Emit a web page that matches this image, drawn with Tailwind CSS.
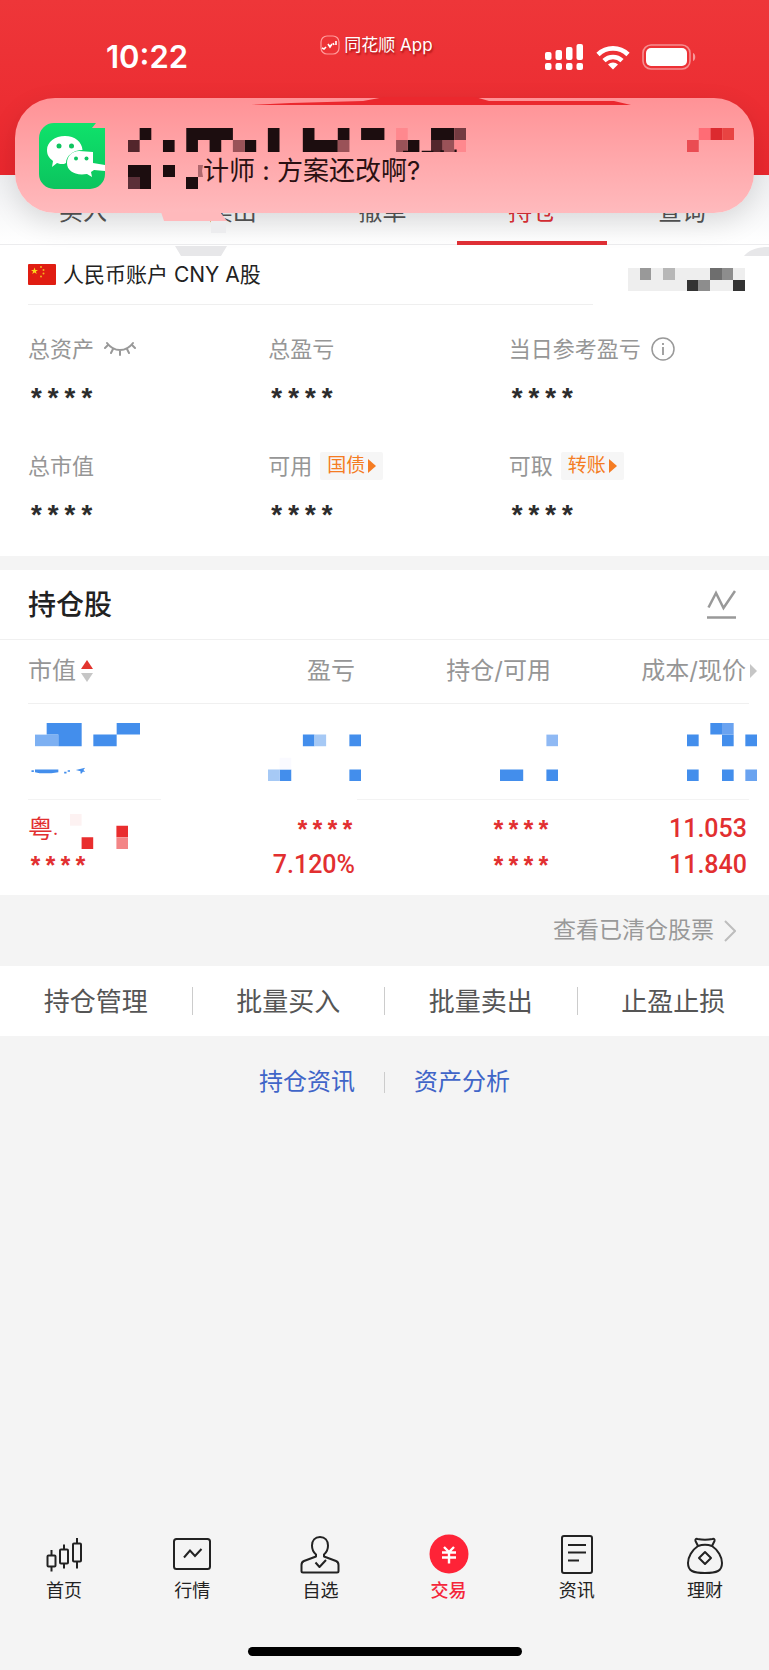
<!DOCTYPE html>
<html lang="zh-CN">
<head>
    <meta charset="UTF-8">
    <meta name="viewport" content="width=device-width, initial-scale=1.0">
    <title>持仓 - 同花顺</title>
    <script src="https://cdn.jsdelivr.net/npm/@tailwindcss/browser@4"></script>
</head>
<body class="relative min-h-screen flex flex-col overflow-x-hidden bg-[#f4f4f4] text-[#222] font-['Inter','Noto_Sans_CJK_SC',sans-serif]">
    <!-- Status bar -->
    <header class="flex h-[175px] items-start justify-between bg-linear-to-b from-[#ee3639] to-[#eb272e] pl-[106px] pr-[72px] pt-8 text-white">
        <span class="mt-1 w-[102px] text-[31px] leading-[42px] font-semibold">10:22</span>
        <div class="flex items-center gap-1 text-[17px] leading-[26px] text-shadow-[1px_2px_2px_rgb(120_0_0/0.6)]">
            <svg class="size-5" viewBox="0 0 20 20" fill="none">
                <rect x="1" y="1" width="18" height="18" rx="6" stroke="#ff9a9a" stroke-width="1.2"/>
                <path d="M2 13l2 1 2-2M8 9l2 3 2-3M13 8l1 2M16 6v4" stroke="#fff" stroke-width="1.6"/>
            </svg>
            <span>同花顺 App</span>
        </div>
        <div class="mt-3 flex items-center gap-3">
            <svg class="h-[26px] w-[39px]" viewBox="0 0 39 26" fill="#fff">
                <rect x="0" y="8" width="6.500" height="8" rx="2"/>
                <rect x="10.500" y="6" width="6.500" height="10" rx="2"/>
                <rect x="21" y="3" width="6.500" height="13" rx="2"/>
                <rect x="31.500" y="0" width="6.500" height="16" rx="2"/>
                <rect x="0" y="19" width="6.500" height="7" rx="2"/>
                <rect x="10.500" y="19" width="6.500" height="7" rx="2"/>
                <rect x="21" y="19" width="6.500" height="7" rx="2"/>
                <rect x="31.500" y="19" width="6.500" height="7" rx="2"/>
            </svg>
            <svg class="h-[25px] w-[34px]" viewBox="0 0 34 25" fill="none" stroke="#fff" stroke-width="4.6">
                <path d="M2 9.5a21.500 21.500 0 0 1 30 0"/>
                <path d="M8 15.600a13 13 0 0 1 18 0"/>
                <path d="M17 24.500l-5-5a7.200 7.200 0 0 1 10 0z" fill="#fff" stroke="none"/>
            </svg>
            <svg class="h-[26px] w-[55px]" viewBox="0 0 55 26">
                <rect x="1" y="1" width="47" height="24" rx="8" fill="none" stroke="#fff" stroke-opacity=".45" stroke-width="1.6"/>
                <rect x="4" y="4" width="41" height="18" rx="5" fill="#fff"/>
                <path d="M51 9c3 1 3 7 0 8z" fill="#fff" fill-opacity=".5"/>
            </svg>
        </div>
    </header>

    <!-- Trade tabs -->
    <nav class="flex h-[70px] border-b border-[#ececee] bg-linear-to-b from-[#eff0f2] to-white pl-2 pr-3 text-[24px] text-[#555]">
        <button class="flex-1 pt-1">买入</button>
        <button class="flex-1 pt-1">卖出</button>
        <button class="flex-1 pt-1">撤单</button>
        <button class="-mb-px flex-1 border-b-4 border-[#e03036] pt-2 text-[#e03036]">持仓</button>
        <button class="flex-1 pt-1">查询</button>
    </nav>

    <!-- Account summary -->
    <section class="bg-white">
        <div class="flex h-[59px] items-center justify-between pl-7 pr-6">
            <h1 class="flex items-center gap-[7px] text-[21px] leading-[30px]">
                <svg class="h-[21px] w-7" viewBox="0 0 28 21">
                    <rect width="28" height="21" rx="1" fill="#e01d12"/>
                    <path d="M6.500 3.500l.9 2.500h2.600l-2.100 1.600.8 2.500-2.200-1.500-2.200 1.500.8-2.500L3 6h2.600z" fill="#fbd51c"/>
                    <g fill="#f4b21c"><circle cx="13" cy="3" r="1"/><circle cx="15.500" cy="6" r="1"/><circle cx="15.500" cy="9.500" r="1"/><circle cx="13" cy="12.500" r="1"/></g>
                </svg>
                人民币账户 CNY A股
            </h1>
            <svg class="mt-[10px] h-[23px] w-[117px]" viewBox="0 0 10 2" preserveAspectRatio="none" shape-rendering="crispEdges">
                <path fill="#eee" d="M0 0h10v2H0z"/>
                <path fill="#999" d="M1 0h1v1H1z"/>
                <path fill="#b7b7b7" d="M3 0h1v1H3z"/>
                <path fill="#6e6e6e" d="M7 0h1v1H7z"/>
                <path fill="#8d8d8d" d="M8 0h1v1H8zM6 1h1v1H6z"/>
                <path fill="#333" d="M5 1h1v1H5zM9 1h1v1H9z"/>
            </svg>
        </div>
        <div class="ml-7 mr-44 h-px bg-[#efefef]"></div>

        <dl class="grid grid-cols-3 gap-y-[33px] pt-7 pb-[22px] pl-7 pr-5 text-[22px] text-[#969696]">
            <div>
                <dt class="flex h-8 items-center gap-[10px]">总资产
                    <button aria-label="显示资产">
                        <svg class="h-[18px] w-8" viewBox="0 0 32 18" fill="none" stroke="#999" stroke-width="2" stroke-linecap="round">
                            <path d="M3 3c3 4 7 7 13 7s10-3 13-7M4 5L1 8M9 9l-2 4M16 10v5M23 9l2 4M28 5l3 3"/>
                        </svg>
                    </button>
                </dt>
                <dd class="pt-5 font-['Liberation_Mono',monospace] text-[28px] leading-8 font-bold text-[#2c2c2c]">****</dd>
            </div>
            <div>
                <dt class="flex h-8 items-center">总盈亏</dt>
                <dd class="pt-5 font-['Liberation_Mono',monospace] text-[28px] leading-8 font-bold text-[#2c2c2c]">****</dd>
            </div>
            <div>
                <dt class="flex h-8 items-center gap-[10px]">当日参考盈亏
                    <button aria-label="说明">
                        <svg class="size-6" viewBox="0 0 24 24" fill="none" stroke="#999" stroke-width="1.500">
                            <circle cx="12" cy="12" r="11"/>
                            <path d="M12 10v8M12 6v2" stroke-width="1.800"/>
                        </svg>
                    </button>
                </dt>
                <dd class="pt-5 font-['Liberation_Mono',monospace] text-[28px] leading-8 font-bold text-[#2c2c2c]">****</dd>
            </div>
            <div>
                <dt class="flex h-8 items-center">总市值</dt>
                <dd class="pt-5 font-['Liberation_Mono',monospace] text-[28px] leading-8 font-bold text-[#2c2c2c]">****</dd>
            </div>
            <div>
                <dt class="flex h-8 items-center gap-2">可用
                    <button class="flex h-7 items-center gap-[3px] rounded-xs bg-[#f6f6f6] px-[7px] text-[19px] text-[#f57c23]">国债
                        <svg class="h-[14px] w-2" viewBox="0 0 8 14" fill="currentColor"><path d="M0 0l8 7-8 7z"/></svg>
                    </button>
                </dt>
                <dd class="pt-5 font-['Liberation_Mono',monospace] text-[28px] leading-8 font-bold text-[#2c2c2c]">****</dd>
            </div>
            <div>
                <dt class="flex h-8 items-center gap-2">可取
                    <button class="flex h-7 items-center gap-[3px] rounded-xs bg-[#f6f6f6] px-[7px] text-[19px] text-[#f57c23]">转账
                        <svg class="h-[14px] w-2" viewBox="0 0 8 14" fill="currentColor"><path d="M0 0l8 7-8 7z"/></svg>
                    </button>
                </dt>
                <dd class="pt-5 font-['Liberation_Mono',monospace] text-[28px] leading-8 font-bold text-[#2c2c2c]">****</dd>
            </div>
        </dl>
    </section>

    <!-- Positions -->
    <section class="mt-[14px] bg-white">
        <div class="flex h-[70px] items-center justify-between border-b border-[#f0f0f0] pl-7 pr-[33px]">
            <h2 class="text-[28px] leading-10 font-medium">持仓股</h2>
            <button aria-label="走势">
                <svg class="h-[29px] w-[29px]" viewBox="0 0 29 29" fill="none" stroke="#999" stroke-width="2.500">
                    <path d="M1.500 17.500L9 3l7.500 15L28 1M0 27.500h29"/>
                </svg>
            </button>
        </div>
        <div class="ml-7 mr-5">
            <table class="w-full table-fixed text-right">
                <thead>
                    <tr class="h-[63px] border-b border-[#f0f0f0] text-[24px] text-[#969696]">
                        <th class="text-left font-normal">
                            <button class="flex items-center gap-[5px]">市值
                                <svg class="h-[22px] w-3" viewBox="0 0 12 22"><path d="M6 0l6 9H0z" fill="#e2352f"/><path d="M0 13h12l-6 9z" fill="#c6c6c6"/></svg>
                            </button>
                        </th>
                        <th class="w-[196px] pr-[2px] font-normal">盈亏</th>
                        <th class="w-[196px] pr-[2px] font-normal">持仓/可用</th>
                        <th class="w-[196px] font-normal">
                            <button class="-mr-2 inline-flex items-center gap-1">成本/现价
                                <svg class="h-[14px] w-[7px]" viewBox="0 0 7 14" fill="#c6c6c6"><path d="M0 0l7 7-7 7z"/></svg>
                            </button>
                        </th>
                    </tr>
                </thead>
                <tbody>
                    <!-- Masked position, one unit per mosaic cell -->
                    <tr class="h-24 align-top">
                        <td class="border-b border-[#f3f3f3] pt-[19px]">
                            <svg class="ml-[7px] h-[58px] w-[105px] overflow-visible" viewBox="0 0 9 5" preserveAspectRatio="none" fill="#438eec">
                                <path fill="#7db0f2" d="M0 1h2v1H0z"/>
                                <path d="M1 0h3v2H2V1H1zM7 0h2v1H7zM5 1h2v1H5z"/>
                                <path d="M0 4h2v.25l-.6.080H.4L0 4.250zM-.3 4.080h.2v.15h-.2zM2.500 4.200h.2v.150h-.2zM2.800 4.080h.2v.120h-.2zM3.500 4.050l.8-.200-.150.200.150.150h-.200l-.100.150h-.1v-.200z"/>
                            </svg>
                        </td>
                        <td class="pt-[19px]">
                            <svg class="-mr-1 inline-block h-[58px] w-[93px]" viewBox="0 0 8 5" preserveAspectRatio="none" fill="#438eec">
                                <path d="M3 1h1v1H3zM7 1h1v1H7zM1 4h1v1H1zM7 4h1v1H7z"/>
                                <path fill="#a6c9f5" d="M4 1h1v1H4zM0 4h1v1H0z"/>
                                <path fill="#fafaff" d="M1 3h1v1H1z"/>
                            </svg>
                        </td>
                        <td class="border-b border-[#f3f3f3] pt-[19px]">
                            <svg class="-mr-[5px] inline-block h-[58px] w-[58px]" viewBox="0 0 5 5" preserveAspectRatio="none" fill="#438eec">
                                <path fill="#8fb9f4" d="M4 1h1v1H4z"/>
                                <path d="M0 4h2v1H0zM4 4h1v1H4z"/>
                            </svg>
                        </td>
                        <td class="border-b border-[#f3f3f3] pt-[19px]">
                            <svg class="-mr-2 inline-block h-[58px] w-[70px]" viewBox="0 0 6 5" preserveAspectRatio="none" fill="#438eec">
                                <path d="M2 0h1v1H2zM0 1h1v1H0zM3 1h1v1H3zM5 1h1v1H5zM0 4h1v1H0zM3 4h1v1H3z"/>
                                <path fill="#6aa3f0" d="M3 0h1v1H3zM5 4h1v1H5z"/>
                            </svg>
                        </td>
                    </tr>
                    <tr class="h-24 text-[#e22f30]">
                        <td class="text-left">
                            <div class="flex h-9 items-start text-[25px] leading-9">粤<span class="text-[18px]">.</span>
                                <svg class="mt-[3px] ml-3 h-[35px] w-[58px]" viewBox="0 0 5 3" preserveAspectRatio="none" fill="#e92d2e">
                                    <path fill="#fdf2f2" d="M0 0h1v1H0z"/>
                                    <path d="M4 1h1v1H4zM1 2h1v1H1z"/>
                                    <path fill="#f38586" d="M4 2h1v1H4z"/>
                                </svg>
                            </div>
                            <div class="h-9 pt-1 font-['Liberation_Mono',monospace] text-[25px] leading-9 font-bold">****</div>
                        </td>
                        <td class="pr-[2px]">
                            <div class="h-9 pt-1 font-['Liberation_Mono',monospace] text-[25px] leading-9 font-bold">****</div>
                            <div class="font-[Roboto] text-[25px] leading-9 font-medium">7.120%</div>
                        </td>
                        <td class="pr-[2px]">
                            <div class="h-9 pt-1 font-['Liberation_Mono',monospace] text-[25px] leading-9 font-bold">****</div>
                            <div class="h-9 pt-1 font-['Liberation_Mono',monospace] text-[25px] leading-9 font-bold">****</div>
                        </td>
                        <td class="pr-[2px] font-[Roboto] text-[25px] leading-9 font-medium">
                            <div>11.053</div>
                            <div>11.840</div>
                        </td>
                    </tr>
                </tbody>
            </table>
        </div>
    </section>

    <a href="#" class="flex h-[71px] items-center justify-end gap-[10px] pr-[33px] text-[23px] text-[#999]">查看已清仓股票
        <svg class="h-[22px] w-3" viewBox="0 0 12 22" fill="none" stroke="#bdbdbd" stroke-width="2"><path d="M1 1l10 10L1 21"/></svg>
    </a>

    <!-- Batch actions -->
    <div class="flex h-[70px] items-center bg-white text-[26px] text-[#555]">
        <button class="flex-1">持仓管理</button>
        <span class="h-7 w-px bg-[#ccc]"></span>
        <button class="flex-1">批量买入</button>
        <span class="h-7 w-px bg-[#ccc]"></span>
        <button class="flex-1">批量卖出</button>
        <span class="h-7 w-px bg-[#ccc]"></span>
        <button class="flex-1">止盈止损</button>
    </div>

    <div class="mt-7 flex items-center justify-center gap-[29px] text-[24px] leading-9 text-[#4065c8]">
        <a href="#">持仓资讯</a>
        <span class="h-[21px] w-px bg-[#ccc]"></span>
        <a href="#">资产分析</a>
    </div>

    <!-- Bottom tab bar -->
    <footer class="mt-auto pb-[14px]">
        <nav class="grid grid-cols-6 text-[18px] leading-6 text-[#222]">
            <a href="#" class="flex flex-col items-center gap-[5px]">
                <svg class="size-10" viewBox="0 0 40 40" fill="none" stroke="#222" stroke-width="2">
                    <rect x="3.500" y="21.500" width="8" height="11" rx="1"/><rect x="16" y="15.500" width="8" height="14" rx="1"/><rect x="29" y="9.500" width="8" height="18" rx="1"/>
                    <path d="M7.500 16v5.500M7.500 32.500v5M20 10.500v5M20 29.500v5M33 4v5.500M33 27.500v7"/>
                </svg>
                首页
            </a>
            <a href="#" class="flex flex-col items-center gap-[5px]">
                <svg class="size-10" viewBox="0 0 40 40" fill="none" stroke="#222" stroke-width="2">
                    <rect x="2" y="5" width="36" height="30" rx="2.500"/>
                    <path d="M12 23.500l6-7 5 5.500 6.500-7"/>
                </svg>
                行情
            </a>
            <a href="#" class="flex flex-col items-center gap-[5px]">
                <svg class="size-10" viewBox="0 0 40 40" fill="none" stroke="#222" stroke-width="2" stroke-linejoin="round">
                    <path d="M16 20.500c-2.500-2-4-5-4-9 0-5 3-8.500 8-8.500s8 3.500 8 8.500c0 4-1.500 7-4 9v2L36 27c2 .8 2.500 2 2.500 4v6c0 1-.5 1.500-1.500 1.500H3c-1 0-1.500-.5-1.500-1.500v-6c0-2 .5-3.200 2.500-4l12-4.500z"/>
                    <path d="M15.500 28.500l4 4.500 6.500-7"/>
                </svg>
                自选
            </a>
            <a href="#" class="flex flex-col items-center gap-[5px] font-medium text-[#f5263a]">
                <svg class="size-10" viewBox="0 0 40 40" fill="none" stroke="#fff" stroke-width="2.400">
                    <circle cx="20" cy="20" r="19.500" fill="#fe2337" stroke="none"/>
                    <path d="M15 13l5 5 5-5M13 18.500h14M13 23.500h14M20 18v11.500"/>
                </svg>
                交易
            </a>
            <a href="#" class="flex flex-col items-center gap-[5px]">
                <svg class="size-10" viewBox="0 0 40 40" fill="none" stroke="#222" stroke-width="2">
                    <rect x="5" y="2" width="30" height="37" rx="2"/>
                    <path d="M11 11h18M11 18.500h18M11 26.500h11"/>
                </svg>
                资讯
            </a>
            <a href="#" class="flex flex-col items-center gap-[5px]">
                <svg class="size-10" viewBox="0 0 40 40" fill="none" stroke="#222" stroke-width="2" stroke-linejoin="round">
                    <path d="M13 12l-2.500-5c-.5-1.500.5-2.500 2-2 5 1 10 1 15 0 1.500-.5 2.500.5 2 2L27 12"/>
                    <path d="M13 12c4-1.500 10-1.500 14 0 6 4 10 11 10 17 0 8-5 10-17 10S3 37 3 29c0-6 4-13 10-17z"/>
                    <path d="M20 18l6 6-6 6-6-6z"/>
                </svg>
                理财
            </a>
        </nav>
        <div class="mx-auto mt-11 h-[9px] w-[274px] rounded-full bg-black"></div>
    </footer>

    <!-- Notification banner -->
    <aside class="absolute inset-x-[15px] top-[98px] flex h-[115px] items-start rounded-[40px] bg-linear-to-b from-[#ff9296] to-[#ffbabd] pl-6 pr-5 pt-[25px] shadow-[0_10px_28px_rgb(0_0_0/0.12)]">
        <svg class="size-[66px]" viewBox="0 0 66 66">
            <defs><linearGradient id="wx" x2="0" y2="1"><stop stop-color="#0fe26b"/><stop offset="1" stop-color="#0bc45e"/></linearGradient></defs>
            <path d="M15 0h42l-4 5h13v46a15 15 0 0 1-15 15H15A15 15 0 0 1 0 51V15A15 15 0 0 1 15 0z" fill="url(#wx)"/>
            <path d="M26 13c10 0 17 6 17.500 14C34 27 27 33 27 40l-2 1c-3 0-5 0-7-1l-5 4 1-6c-4-3-6-6-6-11 0-8 8-14 18-14z" fill="#fff"/>
            <path d="M40 28c5 0 9 1 14 1v11l12 2v6l-11-1-3 2 1 5-5-3c-12 2-20-3-20-11 0-7 5-12 12-12z" fill="#fff"/>
            <g fill="#0fc45f"><circle cx="20" cy="23" r="2.500"/><circle cx="32.500" cy="23" r="2.500"/><circle cx="37" cy="35.500" r="2"/><circle cx="47.500" cy="35.500" r="2"/></g>
        </svg>
        <div class="ml-[23px] mt-[5px] flex-1">
            <svg class="h-[24px] w-[338px]" viewBox="0 0 29 2" preserveAspectRatio="none" fill="#1c0d0f">
                <path d="M1 0h1v1H1zM3 1h1v1H3zM5 0h4v1H8v1H7V1H6v1H5zM10 1h1v1h-1zM12 0h1v2h-1zM15 0h1v1h2V0h1v1h-1v1h-3zM20 0h2v1h-2zM24 1h1v1h-1zM26 0h2v1h-2z"/>
                <path fill="#53262c" d="M0 1h1v1H0zM26 1h1v1h-1z"/>
                <path fill="#9a5258" d="M9 1h1v1H9zM18 1h1v1h-1zM23 1h1v1h-1zM27 1h1v1h-1z"/>
                <path fill="#743b41" d="M28 0h1v1h-1z"/>
                <path fill="#ff888e" d="M23 0h1v1h-1zM28 1h1v1h-1z"/>
                <path d="M23.600 1.900h.8v.1h-.8zM25.200 1.900h1v.1h-1zM26.800 1.850h.3V2h-.3zM28 1.800h.2V2H28z"/>
            </svg>
            <div class="mt-px flex items-center text-[26px] leading-9 text-[#2a1012]">
                <svg class="mt-[12px] h-[24px] w-[75px]" viewBox="0 0 75 24" fill="#1c0d0f">
                    <path d="M0 0h23v24H12V12H0zM35 0h12v12H35zM58 12h12v12H58z"/>
                    <path fill="#5b3038" d="M0 12h12v12H0z"/>
                    <path fill="#b0686e" d="M70 0h5l-1 6 1 6h-5z"/>
                </svg>
                <span>计师 : 方案还改啊?</span>
            </div>
        </div>
        <svg class="mt-[5px] h-[24px] w-[47px]" viewBox="0 0 4 2" preserveAspectRatio="none">
            <path fill="#ff6c75" d="M1 0h1v1H1z"/>
            <path fill="#dc2a2f" d="M2 0h1v1H2z"/>
            <path fill="#e84442" d="M3 0h1v1H3z"/>
            <path fill="#ea4c52" d="M0 1h1v1H0z"/>
        </svg>
    </aside>

    <!-- Brush strokes around the banner -->
    <svg class="pointer-events-none absolute top-0 left-0 h-[270px] w-[769px]" viewBox="0 0 769 270">
        <path fill="#eb282e" d="M251 105l40-2 72-2 22-4h90l14 4 125 0 17 4z"/>
        <path fill="#ffb9bc" d="M161 212h59l7 9h-63z"/>
        <path fill="#ececee" d="M211 221h15v12h-15z"/>
        <path fill="#e7e7e9" d="M175 246h52l-6 10h-40zM744 256c6-7 14-9 25-9v9z"/>
    </svg>
</body>
</html>
